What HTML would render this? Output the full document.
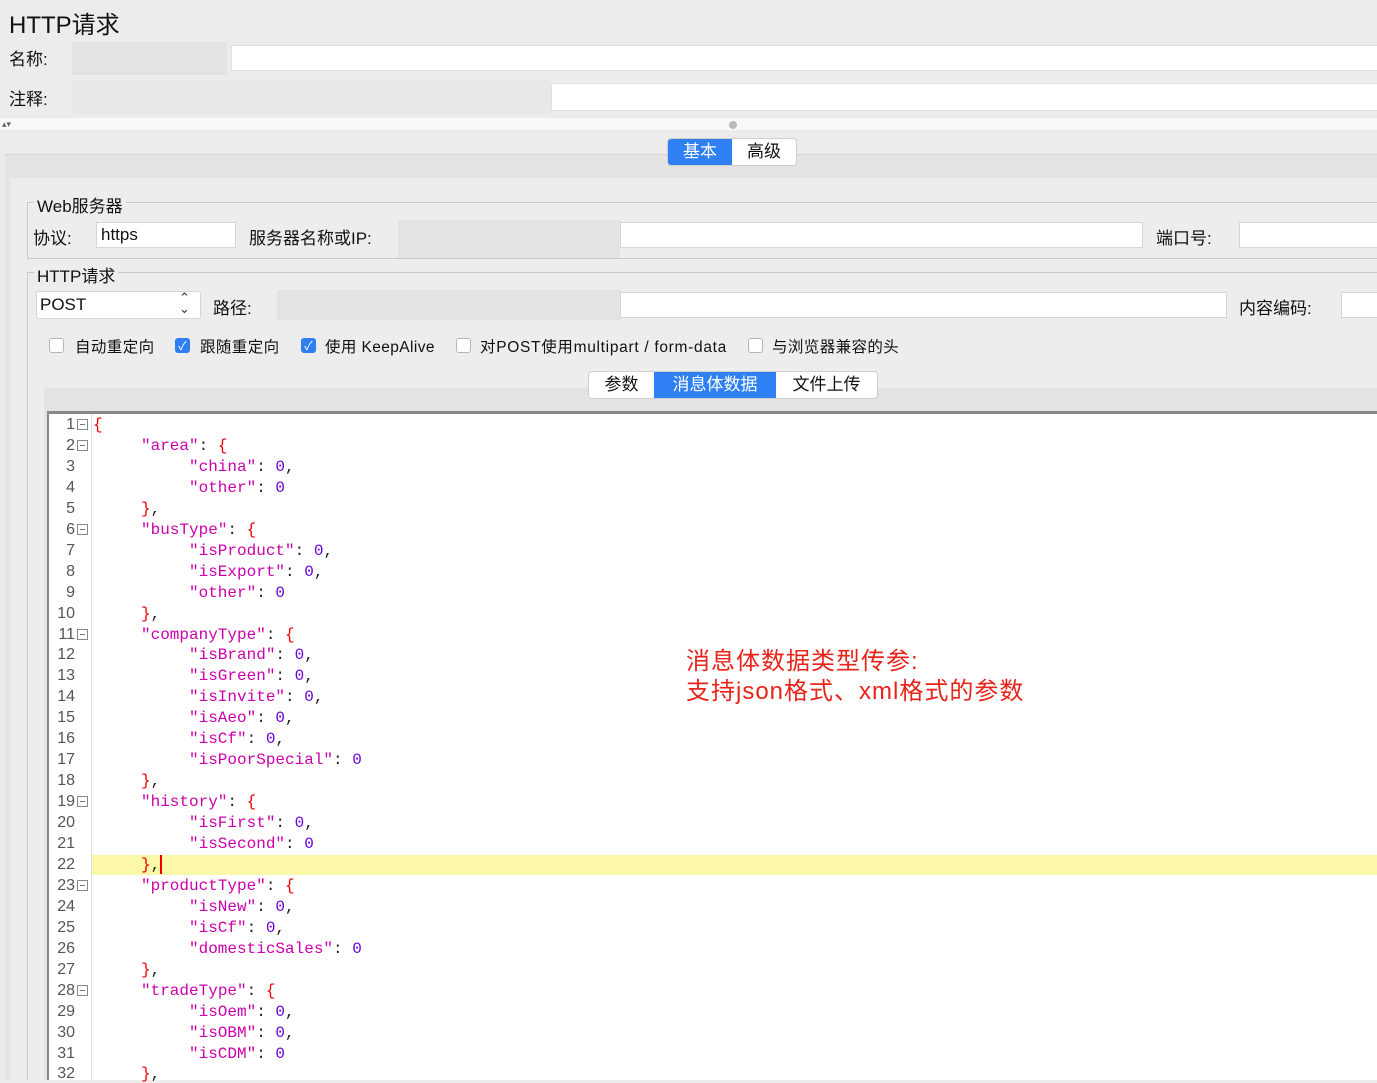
<!DOCTYPE html><html><head><meta charset="utf-8"><style>
*{margin:0;padding:0;box-sizing:border-box}
body{width:1377px;height:1080px;overflow:hidden;background:#ececec;font-family:"Liberation Sans","Noto Sans CJK SC",sans-serif;color:#111;position:relative}
.a{position:absolute}
.t{font-size:17px;white-space:nowrap}
.inp{position:absolute;background:#fff;border:1px solid #d6d6d6}
.blur{position:absolute;background:#e3e3e5}
.cb{position:absolute;width:15px;height:15px;border:1px solid #b5b5b5;border-radius:3px;background:#fff}
.cb.on{background:#2f7ff0;border-color:#2f7ff0;color:#fff;font-size:12px;text-align:center;line-height:14px}
.ck{position:absolute;font-size:15.5px;letter-spacing:0.4px;white-space:nowrap}
.seg{position:absolute;display:flex;border:1px solid #cfcfcf;border-radius:4px;overflow:hidden;background:#fff;font-size:17px}
.seg div{line-height:26px;text-align:center}
.seg .s{background:#2f80f2;color:#fff}
#code{position:absolute;left:49px;top:414px;width:1328px;height:666px;background:#fff;font-family:"Liberation Mono",monospace;font-size:16px}
.ln{position:absolute;left:0;width:26px;text-align:right;color:#555;font-family:"Liberation Sans",sans-serif;font-size:16px}
.fd{position:absolute;left:28px;width:11px;height:11px;border:1px solid #888}
.fd:after{content:"";position:absolute;left:2px;top:4px;width:5px;height:1px;background:#777}
.cl{position:absolute;white-space:pre}
.s1{color:#cc00aa}.n{color:#6a00d6}.b{color:#e00}.p{color:#222}
i,b{font-style:normal;font-weight:normal}
</style></head><body>
<div class="a" style="left:9px;top:5px;font-size:24px">HTTP请求</div>
<div class="a t" style="left:9px;top:45px">名称:</div>
<div class="blur" style="left:72px;top:42px;width:155px;height:33px"></div>
<div class="inp" style="left:231px;top:45px;width:1150px;height:26px;border-color:#e0e0e0"></div>
<div class="a t" style="left:9px;top:85px">注释:</div>
<div class="blur" style="left:73px;top:80px;width:478px;height:35px;background:#e8e8ea"></div>
<div class="inp" style="left:551px;top:83px;width:830px;height:28px;border-color:#e0e0e0"></div>
<div class="a" style="left:0;top:118px;width:1377px;height:12px;background:#f9f9f9"></div>
<div class="a" style="left:2px;top:119px;font-size:9px;color:#666">▴▾</div>
<div class="a" style="left:729px;top:121px;width:8px;height:8px;border-radius:50%;background:#bbb"></div>
<div class="a" style="left:5px;top:154px;width:1372px;height:926px;background:#e4e4e4;border-top:1px solid #d8d8d8"></div>
<div class="a" style="left:10px;top:178px;width:1367px;height:902px;background:#ededed"></div>
<div class="seg" style="left:667px;top:138px"><div class="s" style="width:64px">基本</div><div style="width:64px">高级</div></div>
<div class="a" style="left:27px;top:202px;width:1350px;height:57px;border:1px solid #c8c8c8;border-right:none"></div>
<div class="a t" style="left:34px;top:192px;background:#ededed;padding:0 3px">Web服务器</div>
<div class="a t" style="left:33px;top:224px">协议:</div>
<div class="inp" style="left:96px;top:222px;width:140px;height:26px"></div>
<div class="a t" style="left:101px;top:225px">https</div>
<div class="a t" style="left:249px;top:224px">服务器名称或IP:</div>
<div class="blur" style="left:398px;top:220px;width:222px;height:38px"></div>
<div class="inp" style="left:620px;top:222px;width:523px;height:26px"></div>
<div class="a t" style="left:1156px;top:224px">端口号:</div>
<div class="inp" style="left:1239px;top:222px;width:140px;height:26px"></div>
<div class="a" style="left:27px;top:272px;width:1350px;height:808px;border:1px solid #c8c8c8;border-right:none;border-bottom:none"></div>
<div class="a t" style="left:34px;top:262px;background:#ededed;padding:0 3px">HTTP请求</div>
<div class="inp" style="left:36px;top:291px;width:165px;height:28px;border-radius:3px"></div>
<div class="a t" style="left:40px;top:295px">POST</div>
<div class="a" style="left:179px;top:292px;font-size:13px;line-height:11px;color:#333">⌃<br>⌄</div>
<div class="a t" style="left:213px;top:294px">路径:</div>
<div class="blur" style="left:277px;top:290px;width:343px;height:30px"></div>
<div class="inp" style="left:620px;top:292px;width:607px;height:26px"></div>
<div class="a t" style="left:1239px;top:294px">内容编码:</div>
<div class="inp" style="left:1341px;top:292px;width:40px;height:26px"></div>
<div class="cb" style="left:49px;top:338px"></div><div class="ck" style="left:75px;top:335px">自动重定向</div>
<div class="cb on" style="left:175px;top:338px">✓</div><div class="ck" style="left:200px;top:335px">跟随重定向</div>
<div class="cb on" style="left:301px;top:338px">✓</div><div class="ck" style="left:325px;top:335px">使用 KeepAlive</div>
<div class="cb" style="left:456px;top:338px"></div><div class="ck" style="left:480px;top:335px;letter-spacing:0.7px">对POST使用multipart / form-data</div>
<div class="cb" style="left:748px;top:338px"></div><div class="ck" style="left:772px;top:335px">与浏览器兼容的头</div>
<div class="a" style="left:44px;top:388px;width:1333px;height:692px;background:#e3e3e3"></div>
<div class="a" style="left:47px;top:411px;width:1330px;height:669px;background:#888"></div>
<div class="seg" style="left:588px;top:371px"><div style="width:65px">参数</div><div class="s" style="width:122px">消息体数据</div><div style="width:101px">文件上传</div></div>
<div id="code">
<div class="a" style="left:42px;top:0;width:1px;height:666px;background:#ddd"></div>
<div class="a" style="left:43px;top:441px;width:1300px;height:20px;background:#fbf8a8"></div>
<div class="a" style="left:111px;top:441px;width:2px;height:19px;background:#e00"></div>
<div id="lines"></div>
</div>
<div class="a" style="left:686px;top:647px;color:#e8231a;font-size:24px;line-height:30px;letter-spacing:1px">消息体数据类型传参:<br>支持json格式、xml格式的参数</div>
<script>
var L=[[0,'<b class=b>{</b>'],[1,'<i class=s1>"area"</i>: <b class=b>{</b>'],[2,'<i class=s1>"china"</i>: <i class=n>0</i>,'],[2,'<i class=s1>"other"</i>: <i class=n>0</i>'],[1,'<b class=b>}</b>,'],
[1,'<i class=s1>"busType"</i>: <b class=b>{</b>'],[2,'<i class=s1>"isProduct"</i>: <i class=n>0</i>,'],[2,'<i class=s1>"isExport"</i>: <i class=n>0</i>,'],[2,'<i class=s1>"other"</i>: <i class=n>0</i>'],[1,'<b class=b>}</b>,'],
[1,'<i class=s1>"companyType"</i>: <b class=b>{</b>'],[2,'<i class=s1>"isBrand"</i>: <i class=n>0</i>,'],[2,'<i class=s1>"isGreen"</i>: <i class=n>0</i>,'],[2,'<i class=s1>"isInvite"</i>: <i class=n>0</i>,'],[2,'<i class=s1>"isAeo"</i>: <i class=n>0</i>,'],[2,'<i class=s1>"isCf"</i>: <i class=n>0</i>,'],[2,'<i class=s1>"isPoorSpecial"</i>: <i class=n>0</i>'],[1,'<b class=b>}</b>,'],
[1,'<i class=s1>"history"</i>: <b class=b>{</b>'],[2,'<i class=s1>"isFirst"</i>: <i class=n>0</i>,'],[2,'<i class=s1>"isSecond"</i>: <i class=n>0</i>'],[1,'<b class=b>}</b>,'],
[1,'<i class=s1>"productType"</i>: <b class=b>{</b>'],[2,'<i class=s1>"isNew"</i>: <i class=n>0</i>,'],[2,'<i class=s1>"isCf"</i>: <i class=n>0</i>,'],[2,'<i class=s1>"domesticSales"</i>: <i class=n>0</i>'],[1,'<b class=b>}</b>,'],
[1,'<i class=s1>"tradeType"</i>: <b class=b>{</b>'],[2,'<i class=s1>"isOem"</i>: <i class=n>0</i>,'],[2,'<i class=s1>"isOBM"</i>: <i class=n>0</i>,'],[2,'<i class=s1>"isCDM"</i>: <i class=n>0</i>'],[1,'<b class=b>}</b>,']];
var folds={1:1,2:1,6:1,11:1,19:1,23:1,28:1},h='';
for(var i=0;i<L.length;i++){var y=i*20.95;h+='<div class="ln" style="top:'+(y+2)+'px">'+(i+1)+'</div>';
if(folds[i+1])h+='<div class="fd" style="top:'+(y+5)+'px"></div>';
h+='<div class="cl p" style="left:'+(44+L[i][0]*48)+'px;top:'+(y+2)+'px">'+L[i][1]+'</div>';}
document.getElementById('lines').innerHTML=h;
</script>
</body></html>
